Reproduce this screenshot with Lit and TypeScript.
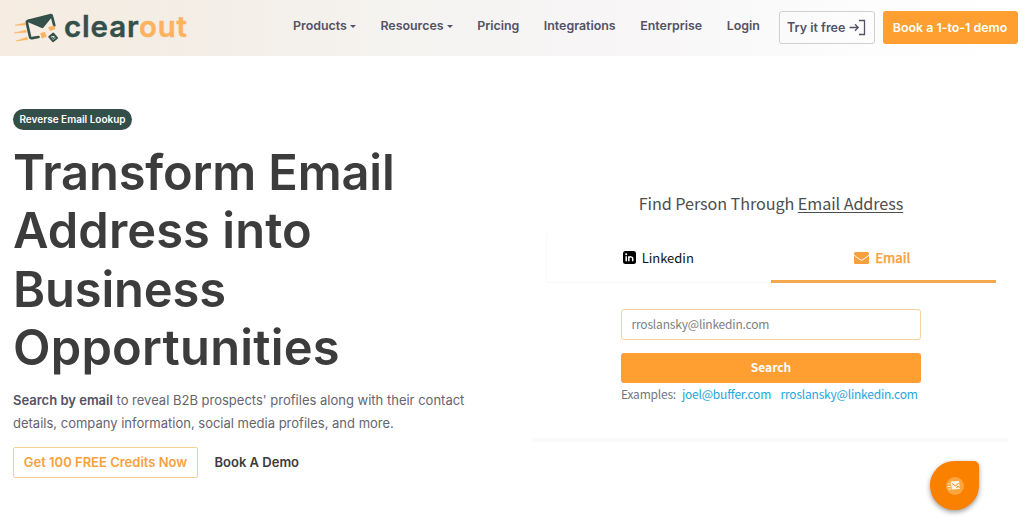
import { LitElement, html, css, svg } from "lit";
import { customElement } from "lit/decorators.js";

const envelope = svg`
  <path d="M28.300 20.700 50 15.200q1.700-.3 2 1.300L54.300 25.500M28.300 20.700q-1.800.5-1.400 2.300L30 36.800q.4 1.600 2 1.300L38.500 37" fill="none" stroke="#34504a" stroke-width="2.700" stroke-linecap="round"/>
  <path d="M27 20.500 51 14.500 52.500 16.500 43.500 27.600Q42.500 28.600 41.200 27.800L27.500 22z" fill="#34504a"/>
  <path d="M40.300 33.200 45 31.800 46.600 36.800 41.800 38.500z" fill="#fdb25d"/>
  <path d="M48 27.300 54.300 25.500 55.300 29.300 50 31z" fill="#fdb25d"/>
  <path d="M49.300 36.800 53.300 33.600 57 38 53 41.200z" fill="none" stroke="#34504a" stroke-width="2" stroke-linejoin="round"/>
  <path d="M51.600 36.800 53.300 38.600 54.600 37.400" fill="none" stroke="#34504a" stroke-width="1.100"/>
  <path d="M15 25.200 25 22.900 25.400 24.900zM14 33 26 30.200 26.400 32.200zM16 41 27 37.300 27.500 39.500z" fill="#fdb25d" stroke="#fdb25d" stroke-width=".5"/>`;

@customElement("app-root")
export class AppRoot extends LitElement {
  static styles = css`
    :host { display: block; height: 520px; overflow: hidden; background: #fff; font-family: Inter, sans-serif; color: #525166; }
    * { box-sizing: border-box; }
    header { height: 55.500px; display: flex; align-items: center; background: linear-gradient(90deg, #f6ece2 0, #f3eee6 20%, #f5f3f0 38%, #f7f5f6 60%, #fdfdfd 86%, #fff 100%); padding-right: 6.500px; white-space: nowrap; }
    .brand { display: flex; width: 293px; height: 55px; }
    .mark { width: 62px; height: 55px; flex: none; }
    .word { font: 600 29.500px/52px Inter, sans-serif; letter-spacing: .85px; color: #34504a; margin: 0 0 0 2px; -webkit-text-stroke: .4px currentColor; }
    .word span { color: #fdb25d; }
    nav { display: flex; gap: 24.500px; font-weight: 600; font-size: 12.420px; line-height: 20px; margin-top: -3px; flex: 1; }
    .item { display: flex; align-items: center; }
    .caret { border: 3.500px solid transparent; border-top-color: currentColor; border-bottom: 0; margin-left: 3px; }
    .try { width: 96px; height: 33px; border: 1px solid #cdd0d2; border-radius: 3px; display: flex; align-items: center; padding: 0 0 1px 7px; gap: 4px; font-size: 12.500px; font-weight: 600; }
    .book { width: 135px; height: 33px; border-radius: 3px; margin-left: 7.500px; background: #ff9f31; color: #fff; font-size: 12.400px; font-weight: 600; line-height: 33px; text-align: center; }
    main { display: grid; grid-template-columns: 533px 1fr; }
    .hero { padding: 53.500px 0 0 13px; }
    .badge { width: 119px; height: 21px; border-radius: 11px; background: #344e49; color: #fff; font-size: 10px; font-weight: 600; line-height: 21px; text-align: center; white-space: nowrap; }
    h1 { margin: 13.500px 0 0; font-size: 48.800px; line-height: 58.600px; font-weight: 600; color: #3c3c3d; white-space: nowrap; }
    .tight { letter-spacing: -.14px; }
    .even { letter-spacing: .08px; }
    .loose { letter-spacing: .24px; }
    .copy { margin: 11.500px 0 0; font-size: 13px; line-height: 22.300px; color: #65646f; white-space: nowrap; }
    .copy b { font-weight: 600; color: #525166; }
    .actions { display: flex; align-items: center; margin-top: 12.800px; font-size: 13px; font-weight: 600; white-space: nowrap; }
    .credits { width: 185px; height: 31px; border: 1px solid #f6d196; border-radius: 2px; color: #f8a13c; line-height: 29px; text-align: center; }
    .demo { color: #3c3c3d; margin-left: 16.500px; }
    .finder { width: 475px; height: 386px; border-bottom: 4px solid #fafafa; font-family: "Noto Sans CJK SC", sans-serif; display: flex; flex-direction: column; padding: 134px 12px 0 13px; white-space: nowrap; }
    .title { text-align: center; font-size: 16.200px; letter-spacing: -.08px; line-height: 26px; color: #4d4e50; }
    .title u { text-underline-offset: 2px; text-decoration-thickness: 1px; }
    .tabs { display: grid; grid-template-columns: 1fr 1fr; margin-top: 17px; height: 50px; font-size: 13px; border-left: 1px solid #fafafa; }
    .tab { display: flex; align-items: center; justify-content: center; gap: 6px; color: #111; border-bottom: 1px solid #f8f8f8; padding-right: 2px; }
    .active { color: #f8a13c; border-bottom: 3px solid #f4a84d; font-weight: 500; padding-top: 3px; margin-left: -1px; -webkit-text-stroke: .25px currentColor; }
    .form { width: 300px; margin: 26px 0 0 75px; }
    .field { height: 31px; border: 1px solid #f3d29d; border-radius: 3px; padding-left: 9.500px; line-height: 28px; font-size: 12px; letter-spacing: -.18px; color: #808080; }
    .search { height: 30px; border-radius: 3px; margin-top: 13px; background: #ff9f31; color: #fff; text-align: center; font-weight: 700; font-size: 12px; line-height: 28px; }
    .examples { display: flex; font-size: 12px; letter-spacing: -.21px; line-height: 18px; margin-top: 2px; color: #74777a; }
    .examples a { color: #27a5dc; margin-left: 6px; }
    .examples a + a { margin-left: 9.500px; }
    .chat { position: absolute; left: 930px; top: 461px; width: 49px; height: 49px; background: #fa8000; border-radius: 50% 5px 50% 50%; box-shadow: 0 2px 5px #0006; display: grid; place-items: center; }
    .disc { width: 18px; height: 18px; border-radius: 50%; background: #fba53f; display: grid; place-items: center; }
  `;

  render() {
    return html`
      <header>
        <div class="brand">
          <svg class="mark" viewBox="0 0 62 55">${envelope}</svg>
          <div class="word">clear<span>out</span></div>
        </div>
        <nav>
          <div class="item">Products<i class="caret"></i></div>
          <div class="item">Resources<i class="caret"></i></div>
          <div class="item">Pricing</div>
          <div class="item">Integrations</div>
          <div class="item">Enterprise</div>
          <div class="item">Login</div>
        </nav>
        <div class="try">Try it free
          <svg width="17" height="17" viewBox="0 0 17 17" fill="none" stroke="#525166" stroke-width="1.300"><path d="M.5 8.500H9M6 5.300 9.200 8.500 6 11.700M10 1.500h5.500v14H10"/></svg>
        </div>
        <div class="book">Book a 1-to-1 demo</div>
      </header>
      <main>
        <section class="hero">
          <div class="badge">Reverse Email Lookup</div>
          <h1><span class="tight">Transform Email</span><br><span class="even">Address into</span><br><span class="tight">Business</span><br><span class="loose">Opportunities</span></h1>
          <p class="copy"><b>Search by email</b> to reveal B2B prospects' profiles along with their contact<br>details, company information, social media profiles, and more.</p>
          <div class="actions"><div class="credits">Get 100 FREE Credits Now</div><div class="demo">Book A Demo</div></div>
        </section>
        <section class="finder">
          <div class="title">Find Person Through <u>Email Address</u></div>
          <div class="tabs">
            <div class="tab">
              <svg width="13" height="13" viewBox="0 0 13 13"><rect width="13" height="13" rx="2.500" fill="#000"/><path d="M3.200 5.200v5M5.800 10.200v-5M5.800 7.500c0-2.200 3.900-2.200 3.900.2v2.500" fill="none" stroke="#fff" stroke-width="1.500"/><circle cx="3.200" cy="3.200" r="1" fill="#fff"/></svg>
              Linkedin
            </div>
            <div class="tab active">
              <svg width="15" height="12" viewBox="0 0 15 12"><rect width="15" height="12" rx="1.500" fill="#f8a13c"/><path d="M0 3.200 6 7.700q1.500 1 3 0L15 3.200" fill="none" stroke="#fff" stroke-width="1"/></svg>
              Email
            </div>
          </div>
          <div class="form">
            <div class="field">rroslansky@linkedin.com</div>
            <div class="search">Search</div>
            <div class="examples">Examples: <a>joel@buffer.com</a><a>rroslansky@linkedin.com</a></div>
          </div>
        </section>
      </main>
      <div class="chat"><div class="disc">
        <svg width="15" height="11" viewBox="0 0 15 11"><path d="M3.500 1.500 12 .8l1 8.200-8 .5z" fill="#fff3df"/><path d="M5 3.500 8.500 6 11.500 3M9.500 8l1.500-2 1.500 2" fill="none" stroke="#f58a1a" stroke-width="1"/><path d="M.5 4h3M0 6.500h4M1 9h3.500" stroke="#fff3df" stroke-width=".8"/></svg>
      </div></div>`;
  }
}
